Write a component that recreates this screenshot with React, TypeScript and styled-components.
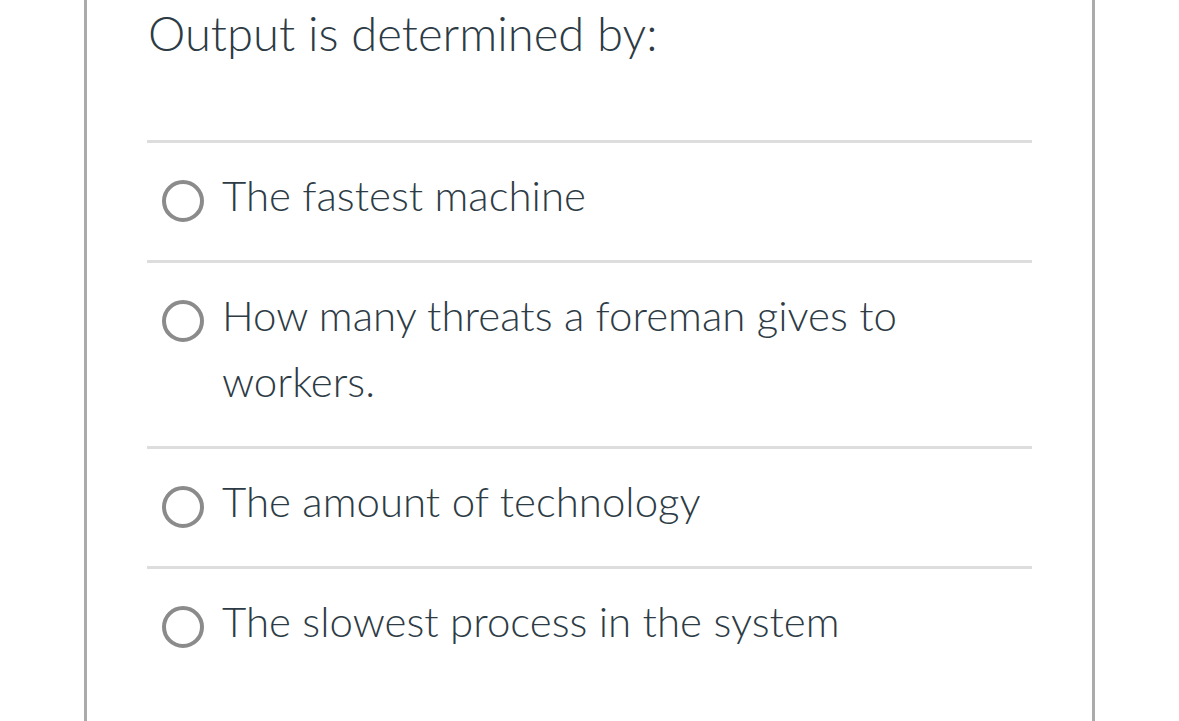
import styled, { createGlobalStyle } from 'styled-components';

const GlobalStyle = createGlobalStyle`
  html, body {
    margin: 0;
    padding: 0;
    background: #ffffff;
  }
  body {
    font-family: Lato, "Open Sans", sans-serif;
    color: #2d3b45;
  }
`;

const Page = styled.div`
  display: flex;
  padding-left: 84px;
  min-height: 100vh;
  box-sizing: border-box;
`;

const Card = styled.div`
  width: 1011px;
  box-sizing: border-box;
  border-left: 3px solid #aaaaaa;
  border-right: 3px solid #aaaaaa;
  padding: 4px 60px 0 60px;
  display: flex;
  flex-direction: column;
`;

const Question = styled.h1`
  margin: 0 0 79px 1px;
  font-family: Lato, sans-serif;
  font-weight: 300;
  font-size: 47.2px;
  line-height: 57px;
  color: #2d3b45;
`;

const AnswerList = styled.div`
  display: flex;
  flex-direction: column;
`;

const Answer = styled.label`
  display: flex;
  align-items: flex-start;
  gap: 18px;
  border-top: 3px solid #dddddd;
  padding: 19px 0 32px 15px;
`;

const Radio = styled.span`
  flex: none;
  width: 42px;
  height: 42px;
  margin-top: 18px;
  box-sizing: border-box;
  border: 4px solid #8b8b8b;
  border-radius: 50%;
  background: #fff;
`;

const AnswerText = styled.span`
  font-family: Lato, sans-serif;
  font-weight: 300;
  font-size: 42px;
  line-height: 66px;
  color: #2d3b45;
  max-width: 700px;
`;

const answers = [
  'The fastest machine',
  'How many threats a foreman gives to workers.',
  'The amount of technology',
  'The slowest process in the system',
];

export default function App() {
  return (
    <>
      <GlobalStyle />
      <Page>
        <Card>
          <Question>Output is determined by:</Question>
          <AnswerList>
            {answers.map((a) => (
              <Answer key={a}>
                <Radio />
                <AnswerText>{a}</AnswerText>
              </Answer>
            ))}
          </AnswerList>
        </Card>
      </Page>
    </>
  );
}
